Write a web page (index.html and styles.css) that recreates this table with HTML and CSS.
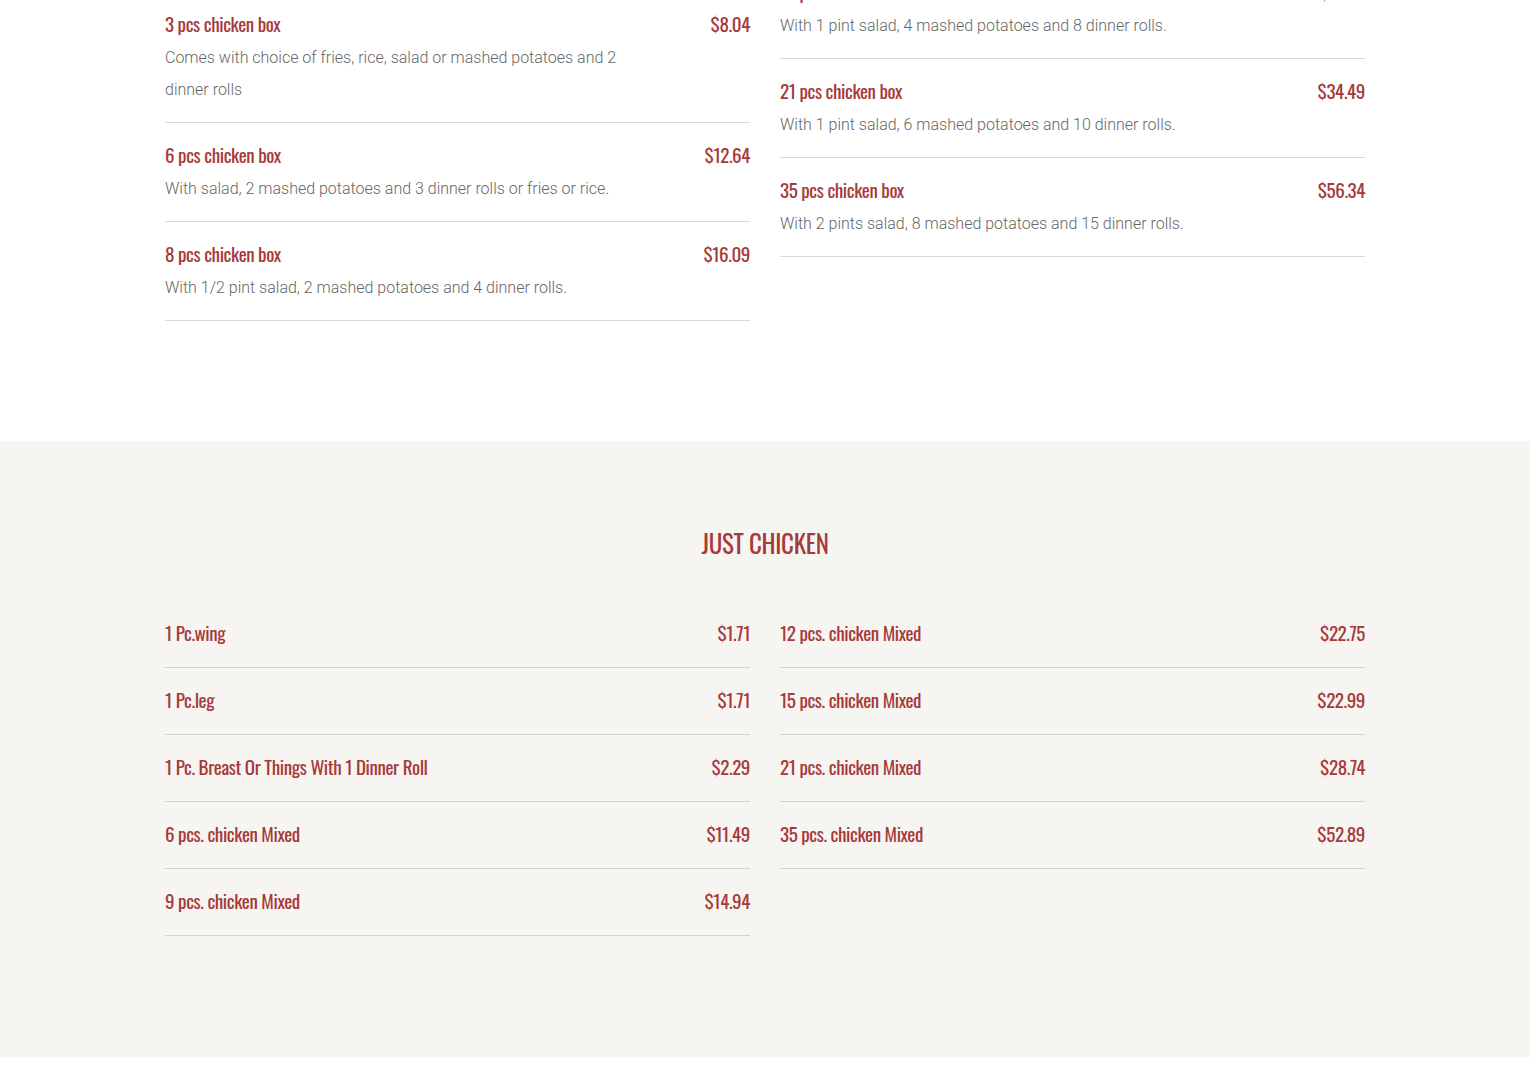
FILE: index.html
```html
<!DOCTYPE html>
<html lang="en">
<head>
<meta charset="utf-8">
<title>Menu</title>
<link rel="stylesheet" href="styles.css">
</head>
<body>
<section class="menu-section menu-section--boxes">
  <div class="container">
    <div class="menu-grid">
      <div class="menu-col">
        <div class="item">
          <div class="item-head"><span class="item-name">2 pcs chicken box</span><span class="item-price">$5.74</span></div>
          <p class="item-desc">Comes with choice of fries, rice, salad or mashed potatoes and 1 dinner roll</p>
        </div>
        <div class="item">
          <div class="item-head"><span class="item-name">3 pcs chicken box</span><span class="item-price">$8.04</span></div>
          <p class="item-desc">Comes with choice of fries, rice, salad or mashed potatoes and 2 dinner rolls</p>
        </div>
        <div class="item">
          <div class="item-head"><span class="item-name">6 pcs chicken box</span><span class="item-price">$12.64</span></div>
          <p class="item-desc">With salad, 2 mashed potatoes and 3 dinner rolls or fries or rice.</p>
        </div>
        <div class="item">
          <div class="item-head"><span class="item-name">8 pcs chicken box</span><span class="item-price">$16.09</span></div>
          <p class="item-desc">With 1/2 pint salad, 2 mashed potatoes and 4 dinner rolls.</p>
        </div>
      </div>
      <div class="menu-col">
        <div class="item">
          <div class="item-head"><span class="item-name">12 pcs chicken box</span><span class="item-price">$21.84</span></div>
          <p class="item-desc">With 1 pint salad, 3 mashed potatoes and 6 dinner rolls.</p>
        </div>
        <div class="item">
          <div class="item-head"><span class="item-name">15 pcs chicken box</span><span class="item-price">$27.59</span></div>
          <p class="item-desc">With 1 pint salad, 4 mashed potatoes and 8 dinner rolls.</p>
        </div>
        <div class="item">
          <div class="item-head"><span class="item-name">21 pcs chicken box</span><span class="item-price">$34.49</span></div>
          <p class="item-desc">With 1 pint salad, 6 mashed potatoes and 10 dinner rolls.</p>
        </div>
        <div class="item">
          <div class="item-head"><span class="item-name">35 pcs chicken box</span><span class="item-price">$56.34</span></div>
          <p class="item-desc">With 2 pints salad, 8 mashed potatoes and 15 dinner rolls.</p>
        </div>
      </div>
    </div>
  </div>
</section>

<section class="menu-section menu-section--alt">
  <div class="container">
    <h2 class="section-title">Just Chicken</h2>
    <div class="menu-grid">
      <div class="menu-col">
        <div class="item"><div class="item-head"><span class="item-name">1 Pc.wing</span><span class="item-price">$1.71</span></div></div>
        <div class="item"><div class="item-head"><span class="item-name">1 Pc.leg</span><span class="item-price">$1.71</span></div></div>
        <div class="item"><div class="item-head"><span class="item-name">1 Pc. Breast Or Things With 1 Dinner Roll</span><span class="item-price">$2.29</span></div></div>
        <div class="item"><div class="item-head"><span class="item-name">6 pcs. chicken Mixed</span><span class="item-price">$11.49</span></div></div>
        <div class="item"><div class="item-head"><span class="item-name">9 pcs. chicken Mixed</span><span class="item-price">$14.94</span></div></div>
      </div>
      <div class="menu-col">
        <div class="item"><div class="item-head"><span class="item-name">12 pcs. chicken Mixed</span><span class="item-price">$22.75</span></div></div>
        <div class="item"><div class="item-head"><span class="item-name">15 pcs. chicken Mixed</span><span class="item-price">$22.99</span></div></div>
        <div class="item"><div class="item-head"><span class="item-name">21 pcs. chicken Mixed</span><span class="item-price">$28.74</span></div></div>
        <div class="item"><div class="item-head"><span class="item-name">35 pcs. chicken Mixed</span><span class="item-price">$52.89</span></div></div>
      </div>
    </div>
  </div>
</section>
<div class="page-end"></div>
</body>
</html>
```

FILE: styles.css
```css
html, body {
  margin: 0;
  padding: 0;
  background: #ffffff;
}

body {
  font-family: Roboto, "Liberation Sans", sans-serif;
  color: #666666;
}

.container {
  width: 1200px;
  margin: 0 auto;
}

.menu-section {
  padding: 0 0 120px;
}

.menu-section--boxes {
  margin-top: -139px;
}

.menu-section--alt {
  background: #f7f5f2;
  padding-top: 82px;
  padding-bottom: 121px;
}

.page-end {
  height: 30px;
}

.section-title {
  margin: 0 0 38px;
  text-align: center;
  font-family: "Oswald", "Roboto Condensed", "DejaVu Sans Condensed", sans-serif;
  font-weight: 400;
  font-size: 25px;
  line-height: 40px;
  letter-spacing: -0.3px;
  text-transform: uppercase;
  color: #a63a3a;
}

.menu-grid {
  display: grid;
  grid-template-columns: 1fr 1fr;
  column-gap: 30px;
  align-items: start;
}

.item {
  padding: 19px 0 23px;
  border-bottom: 1px solid #dcdad7;
}

.menu-section--alt .item {
  border-bottom-color: #d5d1cc;
}

.item-head {
  display: flex;
  justify-content: space-between;
  align-items: center;
  font-family: "Oswald", "Roboto Condensed", "DejaVu Sans Condensed", sans-serif;
  font-size: 19px;
  line-height: 24px;
  letter-spacing: -0.4px;
  color: #a63a3a;
}

.item-desc {
  margin: 7px 0 -7px;
  max-width: 470px;
  font-family: Roboto, "Liberation Sans", sans-serif;
  font-weight: 300;
  font-size: 16px;
  line-height: 32px;
  color: #666666;
}
```
